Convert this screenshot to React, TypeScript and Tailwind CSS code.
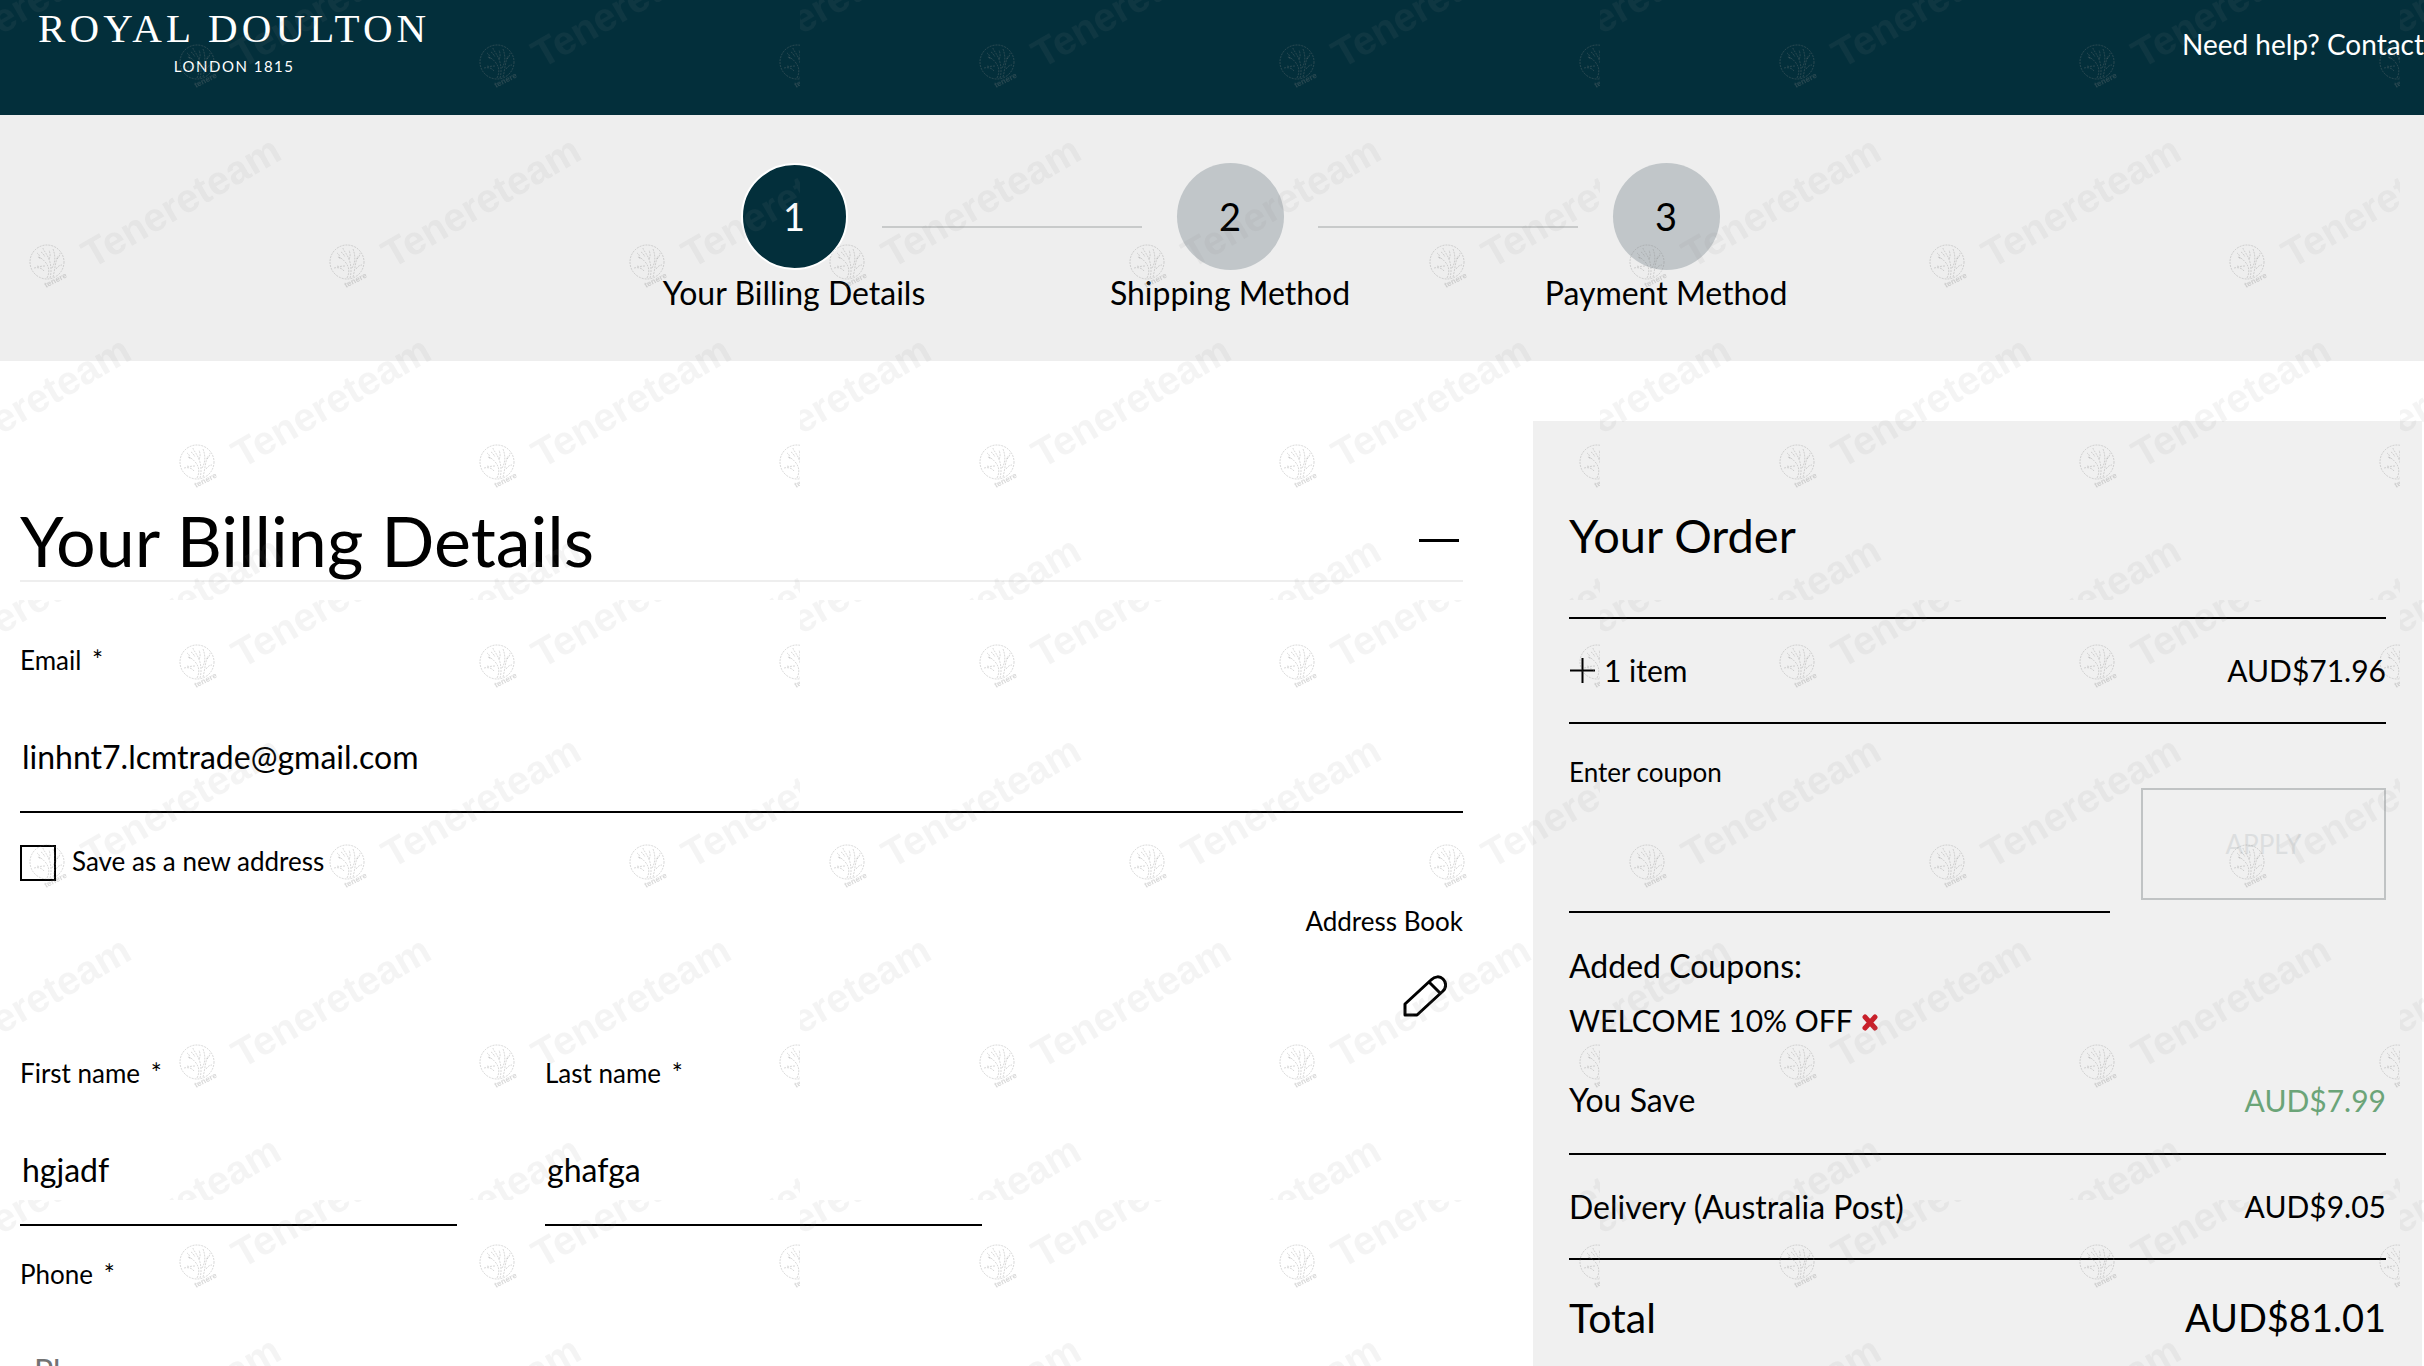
import { useState } from "react";

const steps = ["Your Billing Details", "Shipping Method", "Payment Method"];

// positions of the marks inside one 800x600 watermark tile
const marks = [0, 1, 2, 3].flatMap((row) =>
  [-1, 0, 1, 2].map((col) => ({
    x: (row % 2 === 0 ? 198 : 48) + col * 300,
    y: 63 + row * 200,
  }))
);

const Watermark = () => (
  <svg
    className="pointer-events-none absolute inset-0 h-full w-full font-['Liberation_Sans',sans-serif] font-bold"
    aria-hidden="true"
  >
    <defs>
      <g id="mark" fill="none" stroke="#808080">
        <g strokeWidth="1" strokeOpacity="0.3" strokeDasharray="2 1">
          <circle cx="-1" cy="-1" r="17" />
          <path d="M-1 15C2 9 1 4-2 0s-6-6-9-6M2 15C4 8 3 0 0-6s-5-7-5-9M5 14C7 7 7-1 10-7M4 5C7 0 8-6 5-14M-4 8c-2-3-6-4-10-3M8 6c2-3 4-4 6-4M-8-4c0-3-1-5-3-6M1-4c2-3 1-6 0-9M9-4c2-2 3-4 3-6M-3 3c-3 0-6 1-8 0M-7-11c2 1 3 3 4 5" />
        </g>
        <text transform="translate(-2 25) rotate(-27)" fontSize="8" fill="#808080" fillOpacity="0.3" stroke="none">
          tenere
        </text>
        <text transform="translate(44 6) rotate(-30)" fontSize="40" fill="#808080" fillOpacity="0.09" stroke="none">
          Tenereteam
        </text>
      </g>
      <pattern id="tile" width="800" height="600" patternUnits="userSpaceOnUse">
        {marks.map((m) => (
          <use key={`${m.x}-${m.y}`} href="#mark" x={m.x} y={m.y} />
        ))}
      </pattern>
    </defs>
    <rect width="100%" height="100%" fill="url(#tile)" />
  </svg>
);

type FieldProps = {
  id: string;
  label: string;
  type?: string;
  defaultValue?: string;
  placeholder?: string;
};

const Field = ({ id, label, type = "text", defaultValue, placeholder }: FieldProps) => (
  <div className="flex flex-col">
    <label htmlFor={id} className="text-[26px] leading-8">
      {label} <span className="ml-1">*</span>
    </label>
    <input
      id={id}
      type={type}
      defaultValue={defaultValue}
      placeholder={placeholder}
      className="mt-[26px] h-[111px] w-full border-b-2 border-black bg-transparent pl-0.5 text-[32px] outline-none placeholder:pl-3 placeholder:text-neutral-500"
    />
  </div>
);

const App = () => {
  const [open, setOpen] = useState(true);
  const [coupon, setCoupon] = useState("");

  return (
    <div className="relative h-screen w-full overflow-hidden bg-white font-['Lato',sans-serif] text-[32px] text-black">
      {/* Header */}
      <header className="flex h-[115px] items-start justify-between bg-[#032f3b] text-white">
        <a href="/" className="flex flex-col items-center pt-1 pl-[38px]">
          <span className="font-['Liberation_Serif',serif] text-[41px] leading-12 tracking-widest">ROYAL DOULTON</span>
          <span className="text-[15px] leading-7 tracking-widest">LONDON 1815</span>
        </a>
        <a href="/contact" className="pt-7 text-[28px] leading-8 whitespace-nowrap">
          Need help? Contact
        </a>
      </header>

      {/* Steps */}
      <ol className="flex h-[246px] items-start justify-center bg-[#eeeeee] pt-12 pl-9">
        {steps.map((step, i) => (
          <li key={step} className="flex items-start">
            {i > 0 && <div className="mt-[63px] h-0.5 w-[260px] bg-[#c8caca]" />}
            <div className="flex w-[176px] flex-col items-center">
              <div
                className={`flex h-[107px] w-[107px] items-center justify-center rounded-full text-[38px] ${
                  i === 0 ? "border-2 border-white bg-[#032f3b] text-white" : "bg-[#c1c6c9]"
                }`}
              >
                {i + 1}
              </div>
              <span className="leading-[46px] whitespace-nowrap">{step}</span>
            </div>
          </li>
        ))}
      </ol>

      <main className="flex items-start">
        {/* Billing details */}
        <section className="flex-1 pt-[140px] pr-[70px] pl-5">
          <div className="flex items-center justify-between border-b-2 border-[#eeeeee]">
            <h1 className="text-[70px] leading-[79px]">Your Billing Details</h1>
            <button onClick={() => setOpen(!open)} aria-label="Toggle billing details" className="mr-1 py-4">
              <span className="block h-[3px] w-10 bg-black" />
            </button>
          </div>

          {open && (
            <form className="pt-[62px]">
              <Field id="email" label="Email" type="email" defaultValue="linhnt7.lcmtrade@gmail.com" />

              <div className="mt-8 flex items-start gap-4">
                <input id="save" type="checkbox" className="h-9 w-9 appearance-none border-2 border-black checked:bg-black" />
                <label htmlFor="save" className="text-[26px] leading-8">
                  Save as a new address
                </label>
              </div>

              <div className="mt-6 flex flex-col items-end">
                <a href="/address-book" className="text-[26px] leading-8">
                  Address Book
                </a>
                <button type="button" aria-label="Edit address" className="mt-[38px] mr-4">
                  <svg width="44" height="42" viewBox="0 0 44 42" fill="none" stroke="black" strokeWidth="3">
                    <path d="M2 40V29L28 5c4-4 9-4 12-1s4 8 0 12L14 40Z" strokeLinejoin="round" />
                    <path d="M26 7 37 18" />
                  </svg>
                </button>
              </div>

              <div className="mt-10 grid grid-cols-[437px_437px] gap-x-[88px] gap-y-8">
                <Field id="first-name" label="First name" defaultValue="hgjadf" />
                <Field id="last-name" label="Last name" defaultValue="ghafga" />
                <Field id="phone" label="Phone" type="tel" placeholder="Phone" />
              </div>
            </form>
          )}
        </section>

        {/* Order summary */}
        <aside className="mt-[60px] mr-[2px] min-h-screen w-[889px] bg-[#f0f0f0] px-9 pt-[88px]">
          <h2 className="text-[47px] leading-[52px]">Your Order</h2>

          <div className="mt-14 flex h-[107px] items-center justify-between border-y-2 border-black text-[30px]">
            <button className="flex items-center gap-2">
              <svg width="27" height="27" viewBox="0 0 27 27" stroke="black" strokeWidth="2">
                <path d="M13.5 1v25M1 13.5h25" />
              </svg>
              1 item
            </button>
            <span>AUD$71.96</span>
          </div>

          <div className="flex items-start gap-[31px]">
            <div className="flex flex-1 flex-col pt-8">
              <label htmlFor="coupon" className="text-[26px] leading-8">
                Enter coupon
              </label>
              <input
                id="coupon"
                value={coupon}
                onChange={(e) => setCoupon(e.target.value)}
                className="h-[125px] w-full border-b-2 border-black bg-transparent outline-none"
              />
            </div>
            <button
              disabled={!coupon}
              className="mt-16 h-[112px] w-[245px] border-2 border-black text-[26px] disabled:border-[#c0c3c4] disabled:text-[#dcdedf]"
            >
              APPLY
            </button>
          </div>

          <div className="mt-[26px] leading-[54px]">
            <p>Added Coupons:</p>
            <p className="flex items-center text-[30px]">
              WELCOME 10% OFF
              <button aria-label="Remove coupon" className="mt-1 ml-2">
                <svg width="18" height="18" viewBox="0 0 18 18" stroke="#c8202a" strokeWidth="5" strokeLinecap="round">
                  <path d="m4 4 10 11M14 4 4 15" />
                </svg>
              </button>
            </p>
          </div>

          <div className="flex h-[108px] items-center justify-between border-b-2 border-black">
            <span>You Save</span>
            <span className="text-[30px] text-[#6ba478]">AUD$7.99</span>
          </div>
          <div className="flex h-[105px] items-center justify-between border-b-2 border-black">
            <span>Delivery (Australia Post)</span>
            <span className="text-[30px]">AUD$9.05</span>
          </div>
          <div className="flex h-[115px] items-center justify-between">
            <span className="text-[41px]">Total</span>
            <span className="text-[38px]">AUD$81.01</span>
          </div>
        </aside>
      </main>

      <Watermark />
    </div>
  );
};

export default App;
